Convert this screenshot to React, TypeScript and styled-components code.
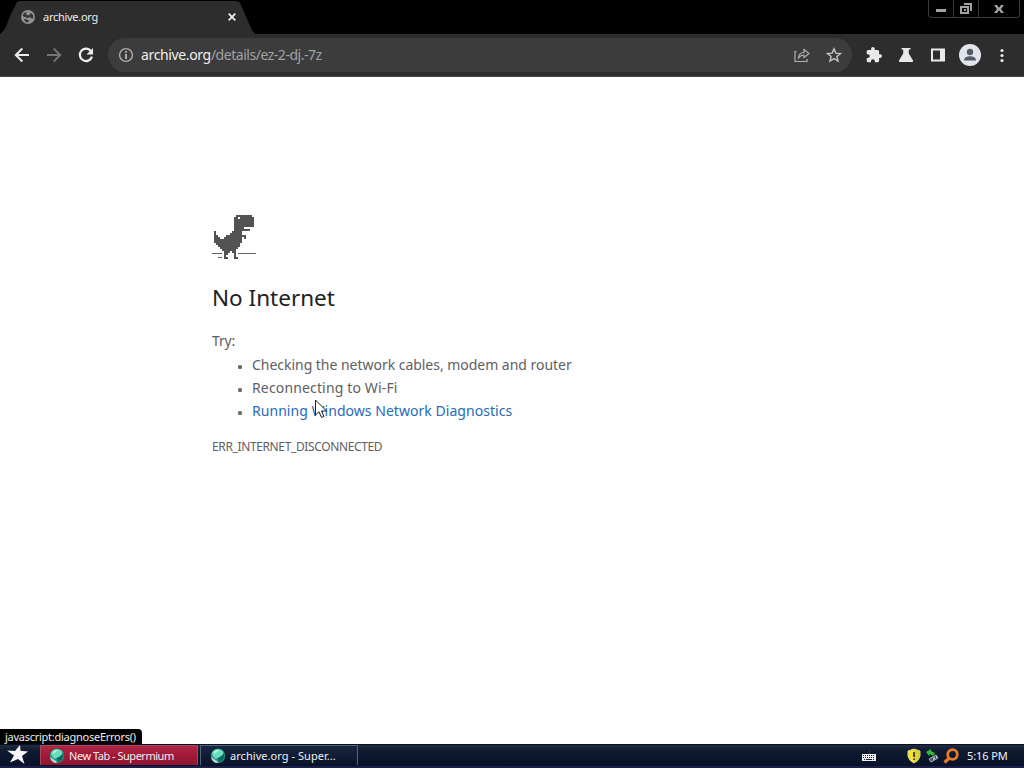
import React from 'react';
import styled, { createGlobalStyle } from 'styled-components';

const DINO = [
  '...........########.',
  '..........##.#######',
  '..........##########',
  '..........##########',
  '..........##########',
  '..........##########',
  '..........#####.....',
  '..........########..',
  '#........#####......',
  '#.......######......',
  '##....##########....',
  '###..#########.#....',
  '##############......',
  '##############......',
  '.############.......',
  '..###########.......',
  '...#########........',
  '....#######.........',
  '.....###.##.........',
  '.....##...#.........',
  '.....#....#.........',
  '.....##...##........',
];

const dinoPath = DINO.map((row, y) =>
  row
    .split('')
    .map((cell, x) => (cell === '#' ? `M${x * 2 + 2} ${y * 2}h2v2h-2z` : ''))
    .join('')
).join('');

function Dino() {
  return (
    <svg width="44" height="44" viewBox="0 0 44 44" shapeRendering="crispEdges">
      <path fill="#535353" d={dinoPath} />
      <path fill="#636363" d="M0 38h10v1H0zM26 38h18v1H26zM6 42h4v1H6z" />
    </svg>
  );
}

function Orb() {
  return (
    <svg width="16" height="16" viewBox="0 0 16 16">
      <circle cx="8" cy="7.8" r="7.2" fill="#23967f" />
      <path fill="#65dfbd" d="M2 5C4 1 8 .5 11 2c3 1 3 4 1 6s-5 1-6 3C3 9 2 7 2 5z" />
      <path fill="#b6f4db" d="M4 4c1-2 4-2.500 6-1.500C7 3 6 5 4 6z" />
      <path fill="#0a665d" d="M8 10c2-1 4-2 6-5 1 4-1 8-5 9z" />
      <path fill="#b9d6d4" d="M1 9l6 4 1 2c-4 0-6-2-7-6z" />
    </svg>
  );
}

function App() {
  return (
    <Screen>
      <GlobalStyle />
      <TitleBar>
        <Tab>
          <TabShape width="256" height="34" viewBox="0 0 256 34">
            <path fill="#2d2d2d" d="M0 34C6 30 7 23 11 14L17 2Q18 1 21 1H236Q239 1 240 3L251 28Q253 33 256 34z" />
          </TabShape>
          <svg width="14" height="14" viewBox="0 0 14 14">
            <circle cx="7" cy="7" r="7" fill="#929292" />
            <path fill="#343434" d="M1.500 6C2 4 4 2 6 1.700L5 3v1.500l2 .5 2 1.500L8 8 5 7.500zM8 5l2-2 2 2 .5 3-2 .5L9 7zM3 9l3 .5 2 1-1 2C5 12.500 3.500 11 3 9z" />
          </svg>
          <TabTitle>archive.org</TabTitle>
          <svg width="8" height="8" viewBox="0 0 8 8">
            <path d="M.7.7l6.600 6.600M7.300.7L.7 7.300" stroke="#f1f1f1" strokeWidth="1.700" />
          </svg>
        </Tab>
        <WindowControls>
          <WindowButton $width={24}>
            <svg width="11" height="10"><path fill="#a2a2a2" d="M0 5h10v3H0z" /></svg>
          </WindowButton>
          <WindowButton $width={25}>
            <svg width="12" height="12" viewBox="0 0 12 12" shapeRendering="crispEdges">
              <path fill="#a2a2a2" d="M4 0h8v8h-2V2H4z" />
              <path fill="#a2a2a2" fillRule="evenodd" d="M0 3h9v8H0zm2 2v4h5V5z" />
              <path fill="#a2a2a2" d="M4 6h2v2H4z" />
            </svg>
          </WindowButton>
          <WindowButton $width={41}>
            <svg width="10" height="8" viewBox="0 0 10 9" preserveAspectRatio="none">
              <path fill="#a2a2a2" d="M0 0h3l2 3 2-3h3L7 4.500l3 4.500H7L5 6 3 9H0l3-4.500z" />
            </svg>
          </WindowButton>
        </WindowControls>
      </TitleBar>

      <Toolbar>
        <NavButtons>
          <svg width="16" height="16" viewBox="0 0 16 16" fill="none" stroke="#ededed" strokeWidth="2">
            <path d="M15 8H2.500M8.300 1.500L1.800 8l6.500 6.500" />
          </svg>
          <svg width="16" height="16" viewBox="0 0 16 16" fill="none" stroke="#757575" strokeWidth="1.800">
            <path d="M1 8h12.500M7.700 1.500L14.200 8l-6.500 6.500" />
          </svg>
          <svg width="16" height="16" viewBox="0 0 16 16">
            <path d="M13.200 4.300A6.200 6.200 0 1 0 14 9.700" fill="none" stroke="#ededed" strokeWidth="2.200" />
            <path d="M15 1v6.500H8.500z" fill="#ededed" />
          </svg>
        </NavButtons>
        <AddressBar>
          <svg width="16" height="16" viewBox="0 0 16 16">
            <circle cx="8" cy="8" r="6.400" fill="none" stroke="#b0b0b0" strokeWidth="1.400" />
            <path fill="#b8b8b8" d="M7.100 4h1.800v1.800H7.100zM7.100 7h1.800v5H7.100z" />
          </svg>
          <Url><b>archive.org</b>/details/ez-2-dj.-7z</Url>
          <AddressActions>
            <svg width="16" height="16" viewBox="0 0 16 16" fill="none" stroke="#b0b0b0" strokeWidth="1.200">
              <path d="M2.500 4.500H1V14.500h12V12M4.500 11c.3-4 2-5.500 5.500-5.500V2.500l5 4-5 4V8C7.500 8 6 9 4.500 11z" />
            </svg>
            <svg width="16" height="16" viewBox="0 0 16 16">
              <path d="M8 1.800l1.800 4.300 4.700.4-3.600 3 1.100 4.600-4-2.500-4 2.500 1.100-4.600-3.600-3 4.700-.4z" fill="none" stroke="#c4c4c4" strokeWidth="1.400" />
            </svg>
          </AddressActions>
        </AddressBar>
        <ToolbarActions>
          <svg width="16" height="16" viewBox="1 1 22 22" fill="#e9e9e9">
            <path d="M20.500 11H19V7c0-1.100-.9-2-2-2h-4V3.500a2.500 2.500 0 0 0-5 0V5H4c-1.100 0-2 .9-2 2v3.800h1.500a2.700 2.700 0 0 1 0 5.400H2V20c0 1.100.9 2 2 2h3.800v-1.500a2.700 2.700 0 0 1 5.400 0V22H17c1.100 0 2-.9 2-2v-4h1.500a2.500 2.500 0 0 0 0-5z" />
          </svg>
          <svg width="16" height="16" viewBox="0 0 16 16" fill="#e9e9e9">
            <path d="M3.500 1h9v1.500h-1.700v4L15 13.500q.5 1.500-1 1.500H2q-1.500 0-1-1.500l4.200-7v-4H3.500z" />
          </svg>
          <svg width="16" height="16" viewBox="0 0 16 16">
            <path fill="#e9e9e9" fillRule="evenodd" d="M1 1.500h14v13H1zm2 2v9h7v-9z" />
          </svg>
          <Avatar width="22" height="22" viewBox="0 0 22 22">
            <circle cx="11" cy="11" r="11" fill="#e1e4ec" />
            <circle cx="11" cy="8" r="3.200" fill="#525a69" />
            <path fill="#525a69" d="M5 16.500c0-3 3-4.300 6-4.300s6 1.300 6 4.300z" />
          </Avatar>
          <svg width="16" height="16" viewBox="0 0 16 16" fill="#e9e9e9">
            <circle cx="8" cy="3.500" r="1.600" />
            <circle cx="8" cy="8.500" r="1.600" />
            <circle cx="8" cy="13.500" r="1.600" />
          </svg>
        </ToolbarActions>
      </Toolbar>

      <Page>
        <Dino />
        <Heading>No Internet</Heading>
        <Try>Try:</Try>
        <Suggestions>
          <Suggestion $spacing={-0.03}>Checking the network cables, modem and router</Suggestion>
          <Suggestion $spacing={0.15}>Reconnecting to Wi-Fi</Suggestion>
          <Suggestion $spacing={0.04}><a>Running Windows Network Diagnostics</a></Suggestion>
        </Suggestions>
        <ErrorCode>ERR_INTERNET_DISCONNECTED</ErrorCode>
        <Cursor width="13" height="20" viewBox="0 0 13 20">
          <path d="M.5 1v15l3.500-3.300L6.500 18.500l2.500-1.100-2.500-5.400h5z" fill="#fff" stroke="#222" />
        </Cursor>
        <StatusBubble>javascript:diagnoseErrors()</StatusBubble>
      </Page>

      <Taskbar>
        <StartButton>
          <svg width="21" height="20" viewBox="0 0 21 20">
            <path fill="#f5f5fa" d="M13 0l.5 5.700L21 6.500l-6 4.500 2.500 8L11 14l-8 3.500 4-7L0 5.500l8 .5z" />
          </svg>
        </StartButton>
        <TaskButton $alert><Orb /><TaskLabel $spacing={-0.48}>New Tab - Supermium</TaskLabel></TaskButton>
        <TaskButton><Orb /><TaskLabel $spacing={0.05}>archive.org - Super...</TaskLabel></TaskButton>
        <Tray>
          <Keyboard width="14" height="12" viewBox="0 0 14 12" shapeRendering="crispEdges">
            <path d="M7 0v4" stroke="#303848" />
            <path fill="#eef0f4" d="M0 4h14v7H0z" />
            <path d="M1 5.500h12M1 7.500h12" stroke="#172035" strokeDasharray="1 1" />
            <path d="M2 9.500h1M4 9.500h6M11 9.500h1" stroke="#172035" />
          </Keyboard>
          <svg width="14" height="16" viewBox="0 0 14 16">
            <path fill="#f5e52d" stroke="#d8d6a1" d="M7 1l6 2v5q-1 5-6 7-5-2-6-7V3z" />
            <path fill="#aaa920" d="M7 1l6 2v5q-1 5-6 7z" opacity=".3" />
            <path fill="#29251b" d="M6.200 4h1.600v5H6.200zM6.200 10.500h1.600v1.600H6.200z" />
          </svg>
          <svg width="14" height="16" viewBox="0 0 14 16">
            <path fill="#45545f" stroke="#a9b8b8" d="M4 11l7-4 2 3-7 4z" />
            <path fill="#c5ced1" d="M8 10l2-1v2l-2 1zM11 8l1-.5v2l-1 .5z" />
            <path fill="#31b93b" d="M1 4l5-3v2l4 2-2 3-3-2-1 2z" />
          </svg>
          <svg width="16" height="16" viewBox="0 0 16 16" fill="none" stroke="#e77b2d">
            <circle cx="9.500" cy="6.500" r="4.800" strokeWidth="2.800" />
            <path d="M6.300 10L1.500 14.500" strokeWidth="3.200" />
          </svg>
          <Clock>5:16 PM</Clock>
        </Tray>
      </Taskbar>
    </Screen>
  );
}

export default App;

const GlobalStyle = createGlobalStyle`
  * {
    box-sizing: border-box;
  }

  body {
    margin: 0;
    overflow: hidden;
  }

  svg {
    display: block;
    flex-shrink: 0;
  }
`;

const Screen = styled.div`
  display: flex;
  flex-direction: column;
  width: 1024px;
  height: 768px;
  font-family: 'Noto Sans', sans-serif;
  white-space: nowrap;
`;

const TitleBar = styled.header`
  display: flex;
  justify-content: space-between;
  height: 34px;
  background: #000;
`;

const Tab = styled.div`
  position: relative;
  isolation: isolate;
  display: flex;
  align-items: center;
  width: 256px;
  padding-left: 21px;
`;

const TabShape = styled.svg`
  position: absolute;
  inset: 0;
  z-index: -1;
`;

const TabTitle = styled.span`
  width: 193px;
  padding-left: 8px;
  color: #ededed;
  font-size: 11px;
  line-height: 16px;
  letter-spacing: -0.28px;
`;

const WindowControls = styled.div`
  display: flex;
  height: 18px;
  margin-right: 4px;
  border: 1px solid #393939;
  border-top: 0;
  border-radius: 0 0 4px 4px;
`;

const WindowButton = styled.div<{ $width: number }>`
  display: flex;
  align-items: center;
  justify-content: center;
  width: ${({ $width }) => $width}px;

  & + & {
    border-left: 1px solid #393939;
  }
`;

const Toolbar = styled.div`
  display: flex;
  align-items: center;
  height: 43px;
  background: #2d2d2d;
  border-bottom: 1px solid #484848;
`;

const NavButtons = styled.div`
  display: flex;
  gap: 16px;
  width: 108px;
  padding-left: 14px;
`;

const AddressBar = styled.div`
  display: flex;
  align-items: center;
  width: 744px;
  height: 34px;
  padding: 0 10px;
  border-radius: 17px;
  background: #3c3c3c;
`;

const Url = styled.span`
  padding: 0 0 1px 7px;
  color: #a2a2a2;
  font-size: 14px;
  line-height: 20px;
  letter-spacing: -0.47px;

  b {
    color: #efefef;
    font-weight: 400;
    letter-spacing: -0.36px;
  }
`;

const AddressActions = styled.div`
  display: flex;
  gap: 16px;
  margin-left: auto;
`;

const ToolbarActions = styled.div`
  display: flex;
  align-items: center;
  gap: 16px;
  padding-left: 14px;
`;

const Avatar = styled.svg`
  margin: 0 -3px;
`;

const Page = styled.main`
  position: relative;
  height: 667px;
  padding: 138px 212px 0;
  color: #5f6063;
  background: #fefefe;
`;

const Heading = styled.h1`
  margin: 24px 0 0;
  color: #202124;
  font-size: 22.5px;
  font-weight: 400;
  line-height: 30px;
`;

const Try = styled.p`
  margin: 16px 0 0;
  font-size: 14px;
  line-height: 23px;
  letter-spacing: -0.2px;
`;

const Suggestions = styled.ul`
  margin: 1px 0 0;
  padding: 0 0 0 40px;
  list-style: none;
`;

const Suggestion = styled.li<{ $spacing: number }>`
  display: flex;
  align-items: center;
  height: 23px;
  font-size: 14px;
  letter-spacing: ${({ $spacing }) => $spacing}px;

  &::before {
    content: '';
    width: 4px;
    height: 4px;
    margin: 5px 10px 0 -14px;
    border-radius: 1.5px;
    background: #696969;
  }

  a {
    color: #286bb9;
  }
`;

const ErrorCode = styled.div`
  margin-top: 16px;
  font-size: 12px;
  line-height: 18px;
  letter-spacing: -0.37px;
`;

const Cursor = styled.svg`
  position: absolute;
  top: 322px;
  left: 315px;
`;

const StatusBubble = styled.div`
  position: absolute;
  bottom: 0;
  left: 0;
  width: 142px;
  height: 15px;
  padding-left: 5px;
  border-radius: 0 4px 0 0;
  color: #eee;
  background: #000;
  font-size: 11px;
  line-height: 15px;
  letter-spacing: -0.26px;
`;

const Taskbar = styled.footer`
  display: flex;
  height: 24px;
  border-top: 1px solid #061021;
  border-bottom: 2px solid #1c1f4b;
  background: linear-gradient(#202c40 0, #101a30 25%, #071127 100%);
`;

const StartButton = styled.div`
  width: 40px;
  padding-left: 7px;
`;

const TaskButton = styled.div<{ $alert?: boolean }>`
  display: flex;
  align-items: center;
  width: 158px;
  height: 20px;
  margin-right: 2px;
  padding-left: ${({ $alert }) => ($alert ? 8 : 9)}px;
  border: 1px solid ${({ $alert }) => ($alert ? '#a5465b' : '#53617b')};
  border-bottom: 0;
  background: ${({ $alert }) =>
    $alert ? 'linear-gradient(#ac2743, #a31937 50%, #8e1531)' : 'linear-gradient(#192641, #091329)'};
`;

const TaskLabel = styled.span<{ $spacing: number }>`
  padding-left: 4px;
  color: #f0f0f4;
  font-size: 11px;
  line-height: 18px;
  letter-spacing: ${({ $spacing }) => $spacing}px;
`;

const Tray = styled.div`
  display: flex;
  align-items: center;
  gap: 4px;
  margin-left: auto;
  padding-right: 16px;
`;

const Keyboard = styled.svg`
  margin-right: 27px;
`;

const Clock = styled.span`
  width: 41px;
  margin-left: 4px;
  color: #f2f2f6;
  font-size: 11px;
  letter-spacing: -0.1px;
`;
